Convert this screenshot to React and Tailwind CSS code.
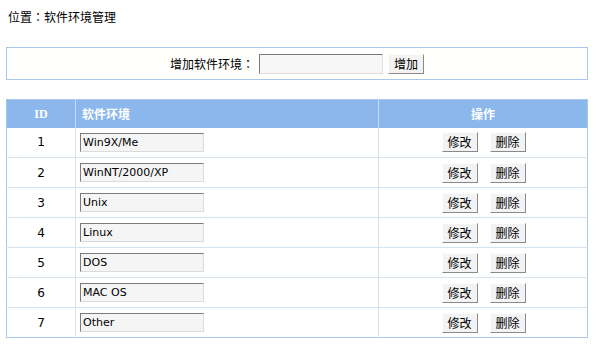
const rows = [
  { id: 1, name: 'Win9X/Me' },
  { id: 2, name: 'WinNT/2000/XP' },
  { id: 3, name: 'Unix' },
  { id: 4, name: 'Linux' },
  { id: 5, name: 'DOS' },
  { id: 6, name: 'MAC OS' },
  { id: 7, name: 'Other' },
];

const latin = "font-['DejaVu_Sans','Noto_Sans_CJK_SC',sans-serif]";
const cjk = "font-['Noto_Sans_CJK_SC',sans-serif]";
const colon = "font-['Noto_Sans_CJK_TC',sans-serif]";

function Btn({ children }) {
  return (
    <button className={`h-[20px] w-[36px] text-[12px] leading-none bg-[#f3f3f3] text-black border border-t-[#fdfdfd] border-l-[#fdfdfd] border-r-[#8a8a8a] border-b-[#8a8a8a] ${cjk}`}>
      {children}
    </button>
  );
}

export default function App() {
  return (
    <div className={`w-[596px] h-[353px] bg-white text-black text-[12px] ${latin}`}>
      {/* location */}
      <div className={`pl-[8px] pt-[8px] h-[47px] text-[12px] ${cjk}`}>
        位置<span className={colon}>：</span>软件环境管理
      </div>

      {/* add bar */}
      <div className="mx-[6px] w-[582px] h-[33px] border border-[#a9c7ea] bg-[#fffffd] flex items-center justify-center gap-[5px]">
        <span className={cjk}>增加软件环境<span className={colon}>：</span></span>
        <input className="w-[124px] h-[20px] bg-[#f8f7f8] border border-t-[#7b7b7b] border-l-[#7b7b7b] border-r-[#e0e0e0] border-b-[#e0e0e0] outline-none" />
        <Btn>增加</Btn>
      </div>

      {/* table */}
      <table className="mt-[19px] mx-[6px] w-[582px] border border-[#a9c7ea] border-collapse">
        <thead>
          <tr className="h-[28px] bg-[#8bb7ec] text-white font-bold">
            <th className="w-[69px] border-r border-[#c6dbf5] font-['Liberation_Serif',serif] text-[12px]">ID</th>
            <th className={`w-[303px] border-r border-[#c6dbf5] text-left pl-[6px] text-[12px] ${cjk}`}>软件环境</th>
            <th className={`text-[12px] ${cjk}`}>操作</th>
          </tr>
        </thead>
        <tbody>
          {rows.map((r, i) => (
            <tr key={r.id} className={`h-[30px] ${i < rows.length - 1 ? 'border-b border-[#d5e2f1]' : ''}`}>
              <td className="text-center border-r border-[#d5e2f1] text-[12px]">{r.id}</td>
              <td className="border-r border-[#d5e2f1] pl-[4px]">
                <input
                  defaultValue={r.name}
                  className="w-[124px] h-[19px] px-[2px] text-[11px] bg-[#f5f5f5] border border-t-[#7b7b7b] border-l-[#7b7b7b] border-r-[#dcdcdc] border-b-[#dcdcdc] outline-none"
                />
              </td>
              <td>
                <div className="flex justify-center gap-[12px] pl-[1px]">
                  <Btn>修改</Btn>
                  <Btn>删除</Btn>
                </div>
              </td>
            </tr>
          ))}
        </tbody>
      </table>
    </div>
  );
}
